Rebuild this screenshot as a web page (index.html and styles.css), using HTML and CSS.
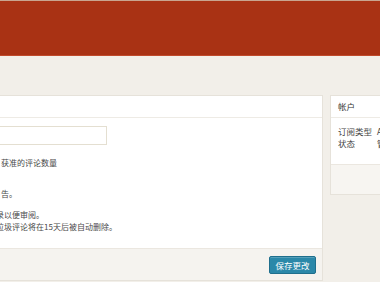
FILE: index.html
```
<!DOCTYPE html>
<html lang="zh-CN">
<head>
<meta charset="utf-8">
<title>设置</title>
<link rel="stylesheet" href="styles.css">
</head>
<body>
<header class="topbar"></header>
<div class="content">
  <div class="layout">
    <section class="panel main">
      <div class="panel-head"></div>
      <div class="panel-body">
        <input class="field" type="text">
        <p class="line first">获准的评论数量</p>
        <p class="line second">告。</p>
        <p class="line cut">录以便审阅。</p>
        <p class="line cut">垃圾评论将在15天后被自动删除。</p>
      </div>
      <div class="panel-foot">
        <button class="btn">保存更改</button>
      </div>
    </section>
    <aside class="panel side">
      <div class="side-head">帐户</div>
      <div class="side-body">
        <div class="row"><span class="label">订阅类型</span><span class="val">Akismet</span></div>
        <div class="row"><span class="label">状态</span><span class="val">管理中</span></div>
      </div>
      <div class="side-foot"></div>
    </aside>
  </div>
</div>
</body>
</html>
```
FILE: styles.css
```
html, body {
  margin: 0;
  padding: 0;
}
body {
  background: #f2efe9;
  font-family: "Noto Sans CJK SC", "Noto Sans", sans-serif;
  font-size: 8px;
  color: #4a4a4a;
  overflow: hidden;
  width: 380px;
  height: 282px;
}
.topbar {
  height: 54px;
  background: #a93214;
  border-top: 1px solid #c9a58f;
  border-bottom: 1px solid #c04a2b;
}
.content {
  padding-top: 39px;
}
.layout {
  display: flex;
  align-items: flex-start;
  margin-left: -12px;
}
.panel {
  background: #fff;
  border: 1px solid #e6e2da;
  box-sizing: border-box;
}
.main {
  width: 335px;
  flex: none;
}
.panel-head {
  height: 21px;
  border-bottom: 1px solid #eeebe5;
}
.panel-body {
  padding: 8px 12px 15px 12px;
}
.field {
  display: block;
  box-sizing: border-box;
  width: 113px;
  height: 19px;
  margin: 0 0 0 -7px;
  border: 1px solid #e4dfd1;
  background: #fff;
  padding: 0;
}
.line {
  margin: 0;
  line-height: 12px;
  white-space: nowrap;
}
.first {
  margin-top: 12px;
}
.second {
  margin-top: 19px;
}
.cut {
  margin-left: -5px;
}
.second + .cut {
  margin-top: 9px;
}
.panel-foot {
  background: #f5f3ef;
  border-top: 1px solid #ebe7e0;
  height: 31px;
  display: flex;
  align-items: center;
  justify-content: flex-end;
  padding-right: 6px;
}
.btn {
  font-family: inherit;
  font-size: 8.5px;
  color: #fff;
  background: #2b88a9;
  border: 1px solid #1f6f8d;
  border-radius: 2px;
  height: 18px;
  width: 47px;
  padding: 0;
  line-height: 16px;
  box-shadow: inset 0 1px 0 rgba(255,255,255,0.2);
}
.side {
  margin-left: 7px;
  width: 70px;
  flex: none;
  font-size: 8.5px;
}
.side-head {
  height: 21px;
  line-height: 21px;
  padding-left: 7px;
  color: #333;
  border-bottom: 1px solid #eeebe5;
}
.side-body {
  padding: 7px 0 14px 7px;
  height: 25px;
}
.row {
  display: flex;
  line-height: 12.3px;
  white-space: nowrap;
}
.label {
  width: 39px;
  flex: none;
  color: #444;
}
.val {
  color: #444;
}
.side-foot {
  background: #f7f5f1;
  border-top: 1px solid #ebe7e0;
  height: 29px;
}
```
